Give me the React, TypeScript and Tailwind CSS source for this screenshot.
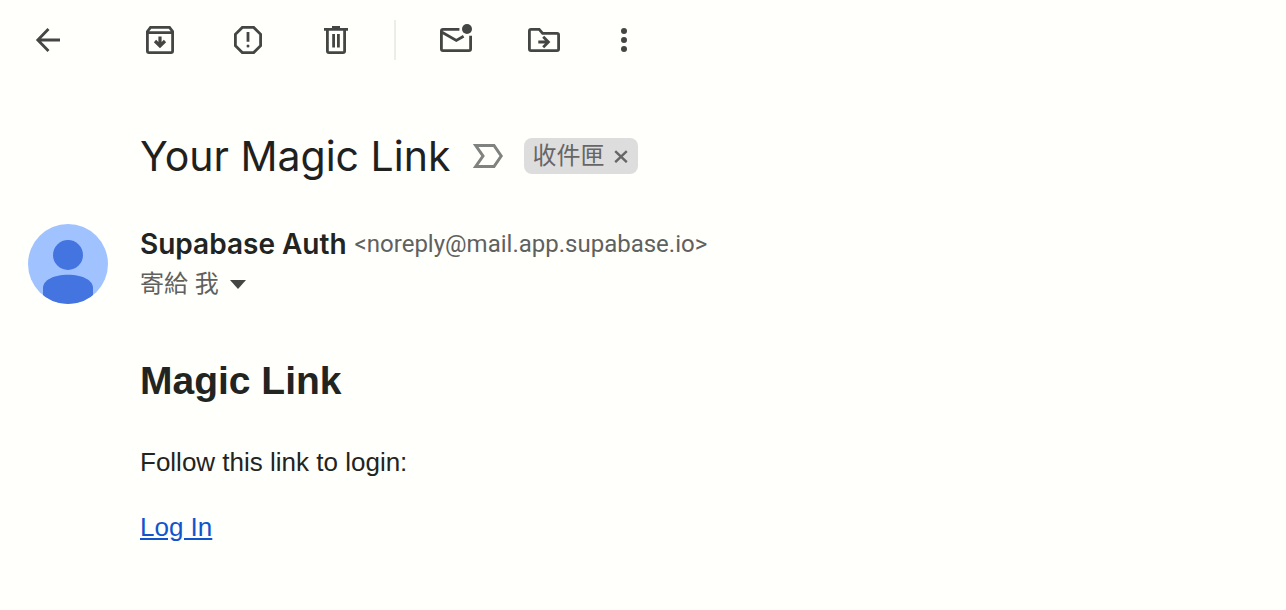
import type { ReactNode } from "react";

function Icon({ children }: { children: ReactNode }) {
  return (
    <svg viewBox="0 0 40 40" className="size-10" fill="none" stroke="currentColor" strokeWidth="2.8" aria-hidden="true">
      {children}
    </svg>
  );
}

function ToolButton({ label, children }: { label: string; children: ReactNode }) {
  return (
    <button type="button" aria-label={label} className="size-10 shrink-0 text-[#444644]">
      <Icon>{children}</Icon>
    </button>
  );
}

function Toolbar() {
  return (
    <div role="toolbar" className="flex items-center px-7 py-5">
      <ToolButton label="Back">
        <path d="M32 20H10.5M20.5 9L9.8 20L20.5 31" />
      </ToolButton>
      <div className="ml-18 flex items-center gap-12">
        <ToolButton label="Archive">
          <path d="M7.4 11.5L10.5 7.4H29.5L32.6 11.5V31Q32.6 32.6 31 32.6H9Q7.4 32.6 7.4 31ZM7.4 12.7H32.6" />
          <path d="M20 16.5V25.5M15 21L20 26L25 21" strokeWidth="3.2" />
        </ToolButton>
        <ToolButton label="Report spam">
          <path d="M14.3 7.4H25.7L32.6 14.3V25.7L25.7 32.6H14.3L7.4 25.7V14.3ZM20 12V21.7" />
          <circle cx="20" cy="26" r="1.5" fill="currentColor" stroke="none" />
        </ToolButton>
        <ToolButton label="Delete">
          <path d="M8 9.4H32M16 7.3H24M11.4 9.4V31Q11.4 32.6 13 32.6H27Q28.6 32.6 28.6 31V9.4M17.6 14V27.6M22.4 14V27.6" />
        </ToolButton>
      </div>
      <div className="ml-[38px] h-10 w-0.5 bg-[#ecedea]" />
      <div className="ml-10 flex items-center gap-12">
        <ToolButton label="Mark as unread">
          <path d="M23.4 9.4H7Q5.4 9.4 5.4 11V29Q5.4 30.6 7 30.6H33Q34.6 30.6 34.6 29V15.8M5.6 12L20.3 20.4L27.6 16.2" />
          <circle cx="31" cy="9" r="5" fill="currentColor" stroke="none" />
        </ToolButton>
        <ToolButton label="Move to">
          <path d="M7 9.4H15.2L18.6 13.3H33Q34.6 13.3 34.6 15V29Q34.6 30.6 33 30.6H7Q5.4 30.6 5.4 29V11Q5.4 9.4 7 9.4ZM14.3 22H24M19.2 16.8L24.4 22L19.2 27.2" />
        </ToolButton>
      </div>
      <div className="ml-10 flex">
        <ToolButton label="More">
          <g fill="currentColor" stroke="none">
            <circle cx="20" cy="11" r="3" />
            <circle cx="20" cy="20" r="3" />
            <circle cx="20" cy="29" r="3" />
          </g>
        </ToolButton>
      </div>
    </div>
  );
}

function Subject() {
  return (
    <div className="mt-12 flex items-center pl-35">
      <h1 className="text-[41px] leading-14 whitespace-nowrap text-[#1f211f]">Your Magic Link</h1>
      <button type="button" aria-label="Important" className="ml-[22px] text-[#80827f]">
        <svg viewBox="0 0 32 26" className="h-[26px] w-8" fill="none" stroke="currentColor" strokeWidth="3" aria-hidden="true">
          <path d="M3.7 2.5H22L29.2 13L22 23.5H3.7L11 13Z" />
        </svg>
      </button>
      <div className="ml-5 flex h-9 items-center rounded-lg bg-[#dddddd] pr-2.5 pl-2 text-[#666666]">
        <span className="text-2xl leading-9">收件匣</span>
        <button type="button" aria-label="Remove label" className="ml-2.5">
          <svg viewBox="0 0 14 14" className="size-3.5" fill="none" stroke="currentColor" strokeWidth="2.4" aria-hidden="true">
            <path d="M1.2 2.2L12.8 13.2M12.8 2.2L1.2 13.2" />
          </svg>
        </button>
      </div>
    </div>
  );
}

function Avatar() {
  return (
    <svg viewBox="0 0 80 80" className="size-20 shrink-0 rounded-full bg-[#a0c3ff]" aria-hidden="true">
      <g fill="#4374e0">
        <circle cx="40" cy="31" r="15" />
        <path d="M15 80V64C15 56 26 50.7 40 50.7S65 56 65 64V80Z" />
      </g>
    </svg>
  );
}

export default function App() {
  return (
    <main className="min-h-screen bg-[#fffffc] font-['Inter','Noto_Sans_CJK_TC',sans-serif] text-[#222422]">
      <Toolbar />
      <Subject />
      <article className="mt-10 flex gap-8 px-7">
        <Avatar />
        <div className="min-w-0">
          <div className="flex h-10 items-center gap-2 whitespace-nowrap">
            <span className="text-[28px] font-semibold">Supabase Auth</span>
            <span className="font-['Roboto',sans-serif] text-2xl text-[#5f615f]">&lt;noreply@mail.app.supabase.io&gt;</span>
          </div>
          <button type="button" className="flex h-10 items-center gap-[11px] text-2xl text-[#5f615f]">
            <span>寄給 我</span>
            <svg viewBox="0 0 16 9" className="h-[9px] w-4 text-[#444644]" fill="currentColor" aria-hidden="true">
              <path d="M0 0H16L8 9Z" />
            </svg>
          </button>
          <div className="mt-13 font-['Liberation_Sans',sans-serif] text-[26px] leading-10">
            <h2 className="text-[39px] leading-[50px] font-bold">Magic Link</h2>
            <p className="mt-9">Follow this link to login:</p>
            <p className="mt-[25px]">
              <a href="#login" className="text-[#1155cc] underline">Log In</a>
            </p>
          </div>
        </div>
      </article>
    </main>
  );
}
